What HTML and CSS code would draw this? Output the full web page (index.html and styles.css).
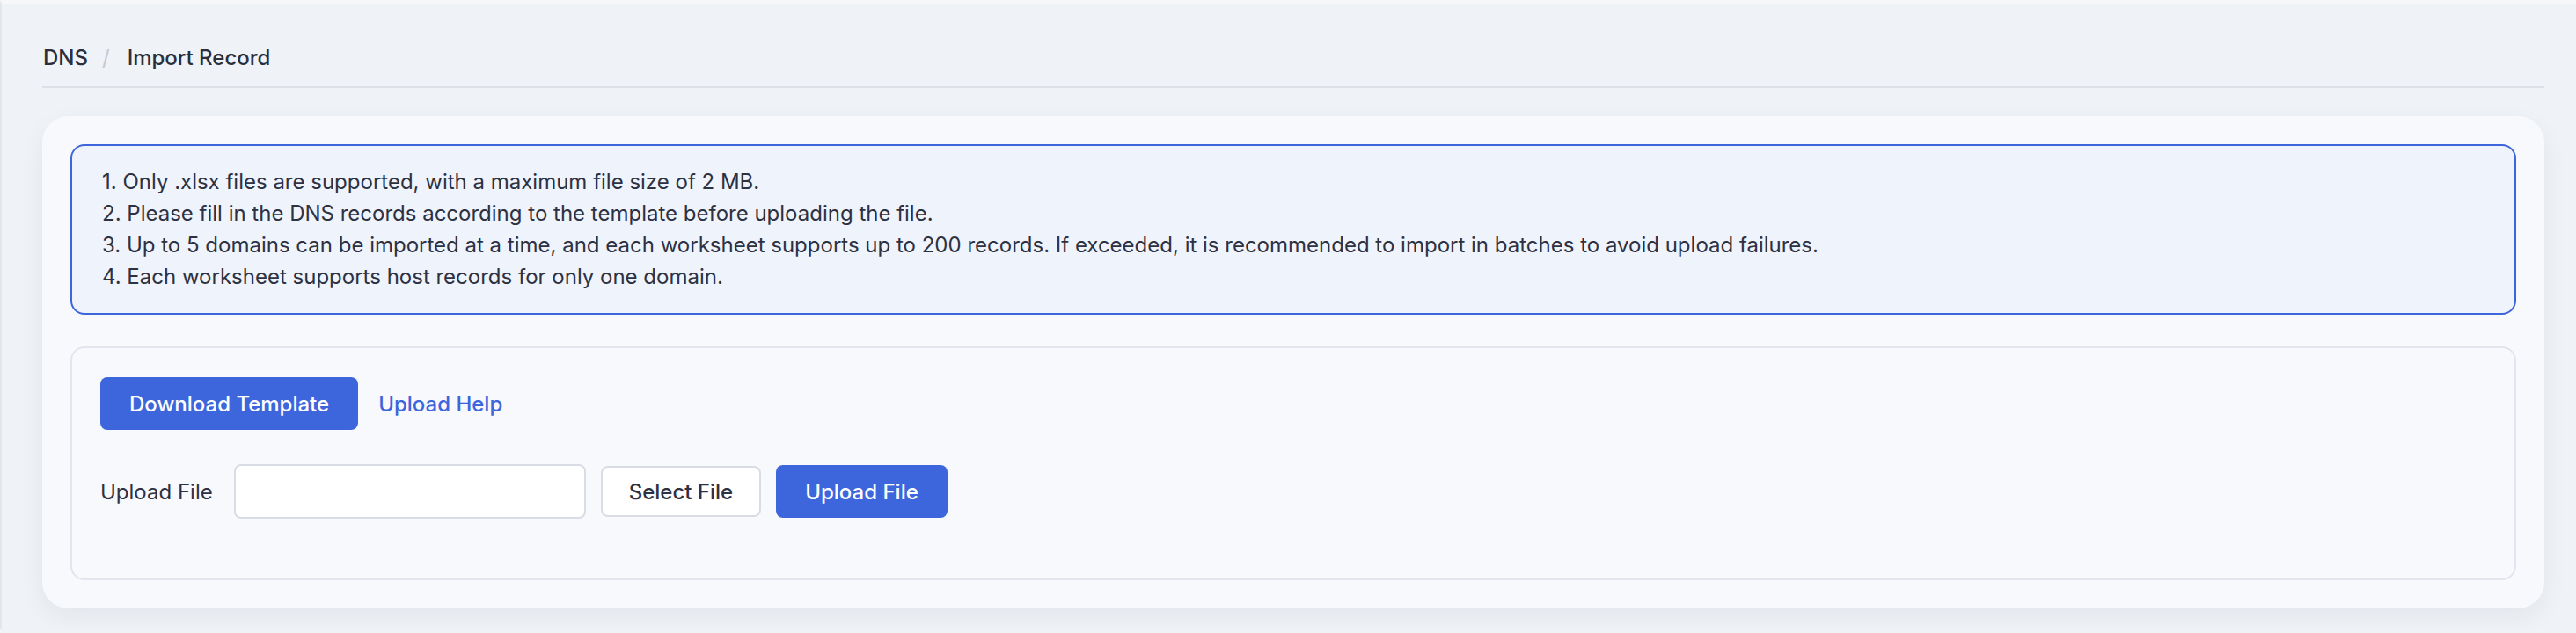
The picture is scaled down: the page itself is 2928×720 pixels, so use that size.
FILE: index.html
```html
<!DOCTYPE html>
<html lang="en">
<head>
    <meta charset="UTF-8">
    <meta name="viewport" content="width=device-width, initial-scale=1.0">
    <title>DNS - Import Record</title>
    <link rel="stylesheet" href="styles.css">
</head>

<body>
    <div class="page">
        <div class="breadcrumb">
            <span class="crumb">DNS</span>
            <span class="crumb-sep">/</span>
            <span class="crumb current">Import Record</span>
        </div>

        <div class="card">
            <div class="notice">
                <p>1. Only .xlsx files are supported, with a maximum file size of 2 MB.</p>
                <p>2. Please fill in the DNS records according to the template before uploading the file.</p>
                <p>3. Up to 5 domains can be imported at a time, and each worksheet supports up to 200 records. If exceeded, it is recommended to import in batches to avoid upload failures.</p>
                <p>4. Each worksheet supports host records for only one domain.</p>
            </div>

            <div class="upload-box">
                <div class="toolbar">
                    <button class="btn btn-primary btn-download">Download Template</button>
                    <a class="help-link" href="#">Upload Help</a>
                </div>
                <div class="upload-row">
                    <label class="upload-label" for="file-name">Upload File</label>
                    <input class="file-input" id="file-name" type="text">
                    <button class="btn btn-default">Select File</button>
                    <button class="btn btn-primary btn-upload">Upload File</button>
                </div>
            </div>
        </div>
    </div>
</body>
</html>
```

FILE: styles.css
```css
body {
    margin: 0;
    padding: 0;
    font-family: 'Inter', 'Noto Sans', Arial, sans-serif;
    color: #2d3142;
    background-color: #eff2f6;
    border-top: 4px solid #f6f7f8;
    border-left: 2px solid #e3e6ea;
    min-height: 716px;
    box-sizing: border-box;
}

.page {
    padding: 0 36px 0 46px;
}

/* breadcrumb */
.breadcrumb {
    display: flex;
    align-items: center;
    height: 36px;
    padding: 44px 0 14px 1px;
    border-bottom: 2px solid #dde1e7;
    font-size: 24px;
    line-height: 36px;
    font-weight: 500;
    color: #2b2f3c;
}

.crumb-sep {
    margin: 0 20px 0 16px;
    color: #c3c8d0;
    font-weight: 400;
}

/* main card */
.card {
    margin-top: 32px;
    padding: 32px;
    background: #f8f9fd;
    border-radius: 30px;
    box-shadow: 0 10px 28px rgba(30, 40, 60, 0.06);
}

.notice {
    padding: 23px 34px;
    background: #eef3fc;
    border: 2px solid #3d66dc;
    border-radius: 16px;
    font-size: 24px;
    line-height: 36px;
    color: #2d3142;
}

.notice p {
    margin: 0;
}

.upload-box {
    margin-top: 36px;
    padding: 33px 32px 68px;
    border: 2px solid #e3e5ee;
    border-radius: 16px;
    background: #f8f9fd;
}

.toolbar {
    display: flex;
    align-items: center;
    gap: 23px;
}

.btn {
    font-family: inherit;
    font-size: 24px;
    font-weight: 500;
    border-radius: 8px;
    cursor: pointer;
    box-sizing: border-box;
}

.btn-primary {
    background: #3d66dc;
    color: #fff;
    border: 0;
    height: 60px;
}

.btn-download {
    padding: 0 33px;
}

.btn-upload {
    padding: 0 33px;
}

.btn-default {
    background: #fff;
    color: #2d3142;
    border: 2px solid #d9dce4;
    height: 58px;
    padding: 0 30px;
}

.help-link {
    color: #3d66dc;
    font-size: 24px;
    font-weight: 500;
    text-decoration: none;
}

.upload-row {
    display: flex;
    align-items: center;
    margin-top: 39px;
}

.upload-label {
    font-size: 24px;
    color: #2d3142;
    margin-right: 24px;
}

.file-input {
    width: 400px;
    height: 62px;
    box-sizing: border-box;
    border: 2px solid #d9dce4;
    border-radius: 8px;
    background: #fff;
    margin-right: 17px;
    outline: none;
}

.upload-row .btn-default {
    margin-right: 17px;
}
```
